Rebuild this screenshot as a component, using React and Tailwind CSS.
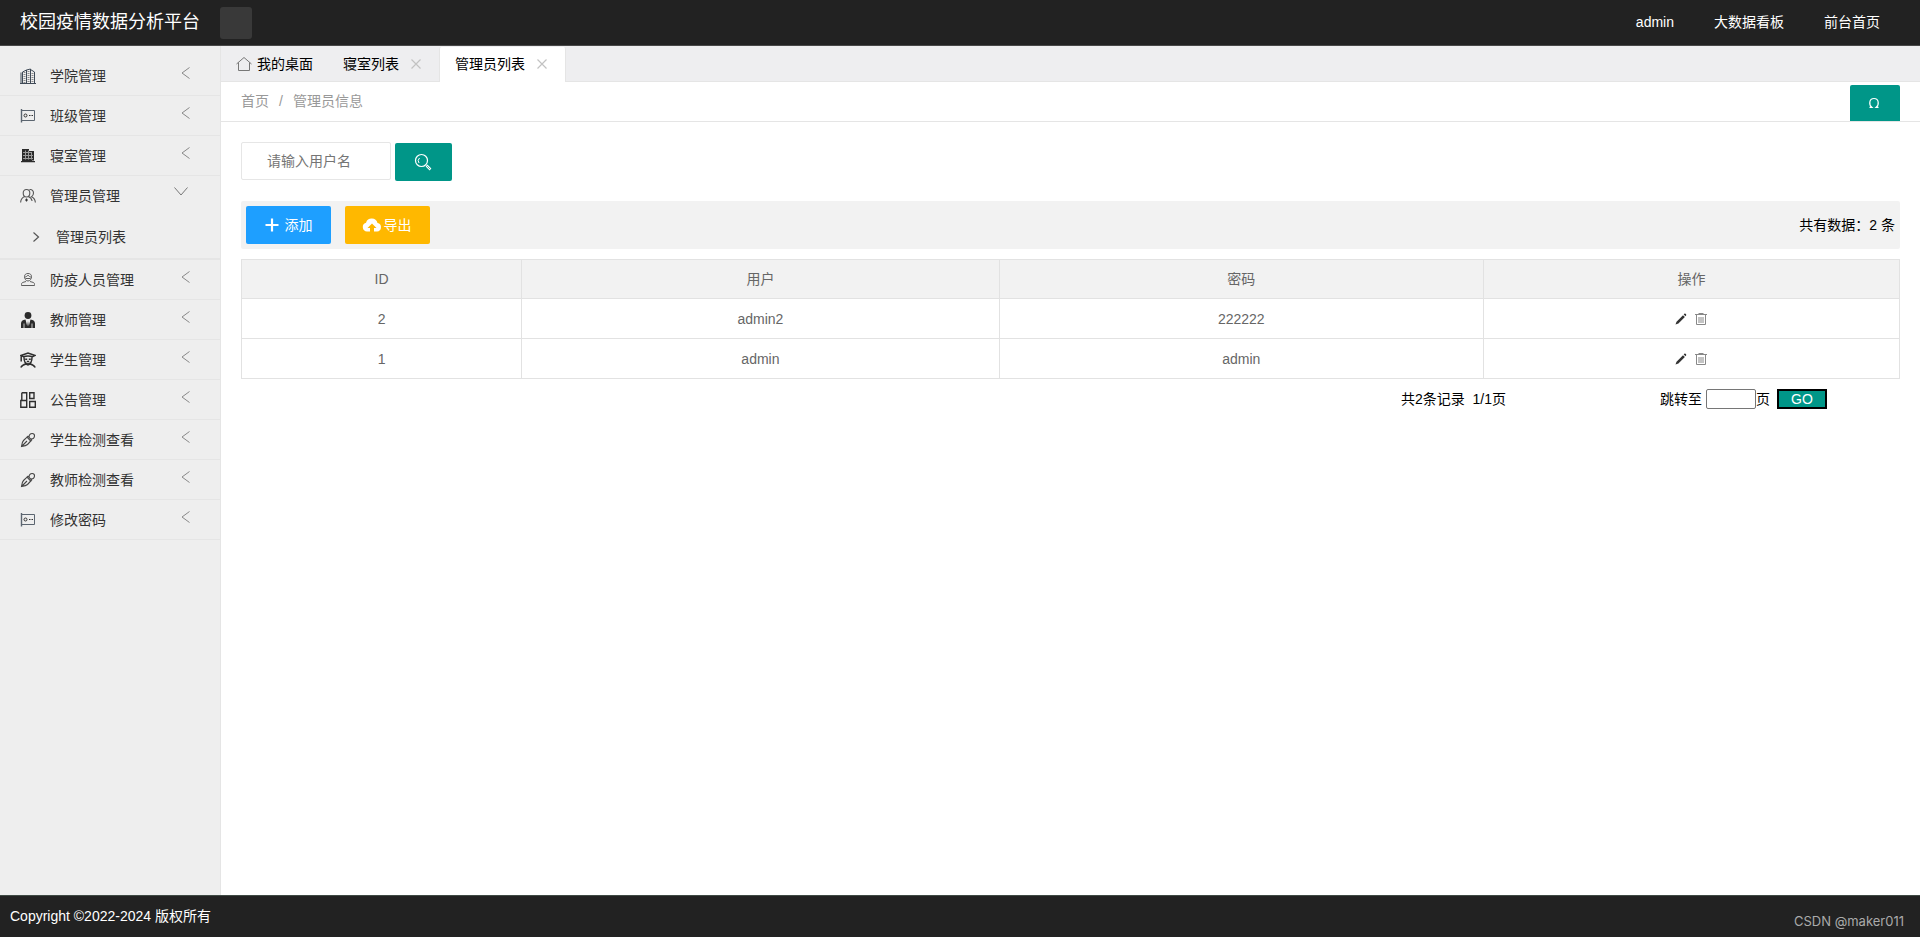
import React, { useState } from "react";

const iconPaths = {
  building: (
    <g fill="none" stroke="#3f4a57" strokeWidth="1">
      <path d="M0 15.500h16" />
      <path d="M2.500 15V4L6.500 2v13M6.500 2l4-1v14M10.500 1.500l4 2.500V15M1 15V4.500" />
      <path d="M4.500 4v11M8.500 3v12M12.500 5v10" stroke="#8b8b8b" strokeDasharray="1 1" strokeWidth="2" />
    </g>
  ),
  board: (
    <g fill="none" stroke="#5b6570" strokeWidth="1">
      <path d="M1.500 1v13.500" strokeWidth="1.400" />
      <path d="M2 2.500h12.500v10H2" />
      <circle cx="5.500" cy="7.500" r="1.500" stroke="#333" />
      <path d="M9 7.500h1.500M11.500 7.500H13" stroke="#333" />
    </g>
  ),
  dorm: (
    <g>
      <path fill="#2b2b2b" d="M2 1h7v2h5v9.500h-2V13H2zM1 13h14v1.200H1z" />
      <path stroke="#999" strokeWidth="1" d="M5.500 2.500v9M8.500 2.500v9M11.500 4.500v7M3 4.500h9M3 7.500h10M3 10.500h10" />
    </g>
  ),
  group: (
    <g fill="none" stroke="#555" strokeWidth="1.100">
      <path d="M6.500 1.500c2.200 0 3.300 1.500 3.300 3.500S8.700 9 6.500 9 3.200 7 3.200 5s1.100-3.500 3.300-3.500z" />
      <path d="M.6 14.500c.2-3.200 1.400-5 4.200-6M8.200 8.500c2.200.8 3.500 2.500 3.900 4.500M9.500 1.600c2.500-.4 4 1.200 4 3.400 0 1.700-.8 3-2 3.700 2.300 1 3.600 3 3.900 5.800" />
      <path d="M5 12h3M6.500 10.500v3" stroke="#333" />
    </g>
  ),
  medic: (
    <g fill="none" stroke="#5e5e5e" strokeWidth="1">
      <path d="M4.500 4.500C4.500 2.500 6 1.500 8 1.500s3.500 1 3.500 3C11.500 7 10 9 8 9S4.500 7 4.500 4.500z" />
      <path d="M4.500 5C6 5 7.500 4 8 3c.8 1.300 2 2 3.500 2M5.500 6.500h5M6 9.500l-3.500 1c-1 .500-1 1.500-1 3h13c0-1.500 0-2.500-1-3l-3.500-1" />
    </g>
  ),
  teacher: (
    <g fill="#2b2b2b">
      <circle cx="8" cy="3.500" r="3.400" />
      <path d="M5.500 7.500 7.200 14l.8-5 .8 5 1.700-6.500c3 .5 4.500 1.800 4.500 4V16H1v-4.500c0-2.200 1.500-3.500 4.500-4z" />
      <path d="M4 11.500V16M12 11.500V16" stroke="#eee" strokeWidth=".8" />
    </g>
  ),
  student: (
    <g fill="none" stroke="#2f2f2f" strokeWidth="1.500">
      <path d="M1 3.500 8 1l7 2.500-2.500 1.300C10 3.800 6 3.800 3.500 4.800zM1.200 4v5.500M4 5c0 4.500 1.500 7 4 7s4-2.500 4-7M5.200 7.200h2M8.800 7.200h2M6.800 9.500h2.400M.8 15.500c1-2 3-3 5.200-3.500l2 1 2-1c2.200.5 4.200 1.500 5.200 3.500" />
    </g>
  ),
  notice: (
    <g fill="none" stroke="#2f2f2f" strokeWidth="1.400">
      <path d="M1.800 .8h4.900v14.500H.8V8.500h5.900M1.800.8v7.700M9.700.8H14v5.700H9.700zM9.700 9.500h5.600v5.800H9.700z" />
    </g>
  ),
  dropper: (
    <g fill="none" stroke="#444" strokeWidth="1.100">
      <path d="M1.500 14.500c.3-2.500.5-4.500 2-6L7 5.200l3.800 3.800-3.300 3.500c-1.500 1.500-3.500 1.700-6 2zM1.500 14.500 7 9" />
      <path d="M7 5.200l1-.9 3.700 3.700-.9 1M9.200 4.700c-.2-2 1.200-3.200 3-3.200 1.400 0 2.300.9 2.300 2.300 0 1.800-1.200 3.200-3.200 3" />
    </g>
  ),
};

const menus = [
  { label: "学院管理", icon: "building" },
  { label: "班级管理", icon: "board" },
  { label: "寝室管理", icon: "dorm" },
  { label: "管理员管理", icon: "group", children: ["管理员列表"] },
  { label: "防疫人员管理", icon: "medic" },
  { label: "教师管理", icon: "teacher" },
  { label: "学生管理", icon: "student" },
  { label: "公告管理", icon: "notice" },
  { label: "学生检测查看", icon: "dropper" },
  { label: "教师检测查看", icon: "dropper" },
  { label: "修改密码", icon: "board" },
];

const users = [
  { id: 2, name: "admin2", password: "222222" },
  { id: 1, name: "admin", password: "admin" },
];

const MenuIcon = ({ name }) => (
  <svg viewBox="0 0 16 16" className="w-4 h-4 shrink-0">
    {iconPaths[name]}
  </svg>
);

const CloseIcon = () => (
  <svg viewBox="0 0 10 10" className="w-2.5 h-2.5">
    <path d="M.5.5l9 9M9.500.5l-9 9" stroke="#c2c2c2" strokeWidth="1.200" />
  </svg>
);

const Header = () => (
  <header className="h-[46px] shrink-0 bg-[#222] border-b border-[#484848] flex items-center text-white">
    <h1 className="ml-5 w-[200px] text-lg leading-[45px] whitespace-nowrap">
      校园疫情数据分析平台
    </h1>
    <button aria-label="菜单" className="w-8 h-8 rounded-[3px] bg-[#393939]" />
    <nav className="ml-auto mr-5 pb-0.5 flex">
      <a href="#" className="px-5">admin</a>
      <a href="#" className="px-5">大数据看板</a>
      <a href="#" className="px-5">前台首页</a>
    </nav>
  </header>
);

const Sidebar = () => {
  const [open, setOpen] = useState("管理员管理");

  return (
    <aside className="w-[221px] shrink-0 bg-[#eee] border-r border-[#e5e5e5] pt-2.5 text-[#333]">
      <ul>
        {menus.map((menu) => {
          const expanded = menu.children && open === menu.label;
          return (
            <li
              key={menu.label}
              className={`border-[#e5e5e5] ${expanded ? "border-b-2" : "border-b"}`}
            >
              <button
                onClick={() => setOpen(expanded ? "" : menu.label)}
                className="w-full h-[39px] pl-5 flex items-center text-left cursor-pointer"
              >
                <MenuIcon name={menu.icon} />
                <span className="ml-3.5 flex-1">{menu.label}</span>
                {expanded ? (
                  <svg viewBox="0 0 14 9" className="w-3.5 h-[9px] mr-8 mb-2">
                    <path d="M.5.5 7 8 13.500.5" fill="none" stroke="#777" />
                  </svg>
                ) : (
                  <svg viewBox="0 0 9 12" className="w-[9px] h-3 mr-[30px] mb-1.5">
                    <path d="M8.500.5 1 6l7.500 5.500" fill="none" stroke="#888" />
                  </svg>
                )}
              </button>
              {expanded && (
                <ul>
                  {menu.children.map((child) => (
                    <li key={child}>
                      <a href="#" className="h-[43px] pl-8 flex items-center">
                        <svg viewBox="0 0 8 10" className="w-2 h-2.5">
                          <path d="M1.500.5 6.500 5l-5 4.500" fill="none" stroke="#555" strokeWidth="1.200" />
                        </svg>
                        <span className="ml-4">{child}</span>
                      </a>
                    </li>
                  ))}
                </ul>
              )}
            </li>
          );
        })}
      </ul>
    </aside>
  );
};

const Tabs = () => (
  <div className="h-9 bg-[#eeeef0] border-b border-[#e5e5e5] flex items-end">
    <button className="h-[35px] px-[15px] flex items-center gap-[5px]">
      <svg viewBox="0 0 16 16" className="w-4 h-4">
        <path d="M.5 8 8 1.500 15.500 8M2.500 6.500v8h11v-8" fill="none" stroke="#777" />
      </svg>
      我的桌面
    </button>
    <div className="h-[35px] pl-[15px] pr-[18px] flex items-center gap-3">
      <button>寝室列表</button>
      <button aria-label="关闭">
        <CloseIcon />
      </button>
    </div>
    <div className="h-[35px] -mb-px pl-[15px] pr-[18px] pb-px flex items-center gap-3 bg-white border-x border-[#e5e5e5] rounded-t-xs">
      <button>管理员列表</button>
      <button aria-label="关闭">
        <CloseIcon />
      </button>
    </div>
  </div>
);

const UserTable = () => (
  <table className="w-full mt-2.5 table-fixed border-collapse text-[#666] text-center">
    <colgroup>
      <col className="w-[16.900%]" />
      <col className="w-[28.800%]" />
      <col className="w-[29.200%]" />
      <col />
    </colgroup>
    <thead>
      <tr className="h-[39px] bg-[#f2f2f2]">
        {["ID", "用户", "密码", "操作"].map((title) => (
          <th key={title} className="border border-[#e2e2e2] font-normal">
            {title}
          </th>
        ))}
      </tr>
    </thead>
    <tbody>
      {users.map((user) => (
        <tr key={user.id} className="h-10">
          <td className="border border-[#e2e2e2]">{user.id}</td>
          <td className="border border-[#e2e2e2]">{user.name}</td>
          <td className="border border-[#e2e2e2]">{user.password}</td>
          <td className="border border-[#e2e2e2]">
            <div className="flex items-center justify-center gap-2">
              <button aria-label="编辑">
                <svg viewBox="0 0 12 12" className="w-3 h-3">
                  <path d="M.5 11.500l1-2.800L8 2.200l1.900 1.900-6.500 6.500zM8.700 1.500l.9-.9c.8-.4 2 .8 1.600 1.600l-.7 1.100z" fill="#333" />
                </svg>
              </button>
              <button aria-label="删除">
                <svg viewBox="0 0 12 12" className="w-3 h-3" fill="none" stroke="#888">
                  <path d="M0 1.500h12M3.500.5h5M1.500 2v9.500h9V2M4 4v6M6 4v6M8 4v6" />
                </svg>
              </button>
            </div>
          </td>
        </tr>
      ))}
    </tbody>
  </table>
);

const App = () => {
  return (
    <div className="min-h-screen flex flex-col bg-white text-black text-sm leading-6 font-['Liberation_Sans','Noto_Sans_CJK_SC',sans-serif]">
      <Header />

      <div className="flex flex-1">
        <Sidebar />

        <main className="flex-1 min-w-0">
          <Tabs />

          {/* Breadcrumb */}
          <div className="h-10 px-5 flex items-center border-b border-[#e5e5e5] text-[#999]">
            <nav className="pb-0.5">
              <a href="#">首页</a>
              <span className="mx-2.5">/</span>
              <a href="#">管理员信息</a>
            </nav>
            <button
              aria-label="刷新"
              className="ml-auto self-end w-[50px] h-9 pr-0.5 rounded-t-xs bg-[#009688] flex items-center justify-center"
            >
              <svg viewBox="0 0 12 12" className="w-3 h-3">
                <path d="M1.500 10.300h2.300C.8 8 .8 1.500 6 1.500s5.200 6.500 2.200 8.800h2.300" fill="none" stroke="#fff" strokeWidth="1.200" />
              </svg>
            </button>
          </div>

          <div className="p-5">
            {/* Search */}
            <form className="flex items-end gap-1 h-[39px]" onSubmit={(e) => e.preventDefault()}>
              <input
                type="text"
                aria-label="用户名"
                placeholder="请输入用户名"
                className="self-start w-[150px] h-[38px] pl-[25px] border border-[#e6e6e6] rounded-xs placeholder:text-[#757575]"
              />
              <button aria-label="搜索" className="w-[57px] h-[38px] pr-0.5 rounded-xs bg-[#009688] flex items-center justify-center">
                <svg viewBox="0 0 18 18" className="w-[18px] h-[18px]" fill="none" stroke="#fff">
                  <circle cx="7.500" cy="7.500" r="6" strokeWidth="1.200" />
                  <path d="M5 10a3.800 3.800 0 0 1 .5-5" />
                  <path d="M12.500 12.500l4 4" strokeWidth="2.500" />
                  <path d="M13 13l3 3" stroke="#009688" strokeWidth=".7" />
                </svg>
              </button>
            </form>

            {/* Toolbar */}
            <div className="mt-5 h-12 px-[5px] flex items-center bg-[#f2f2f2] rounded-xs">
              <button className="w-[85px] h-[38px] rounded-xs bg-[#1e9fff] text-white flex items-center justify-center gap-1.5">
                <svg viewBox="0 0 14 14" className="w-3.5 h-3.5">
                  <path d="M7 .5v13M.5 7h13" stroke="#fff" strokeWidth="2.200" />
                </svg>
                添加
              </button>
              <button className="ml-3.5 w-[85px] h-[38px] pr-0.5 rounded-xs bg-[#ffb800] text-white flex items-center justify-center gap-0.5">
                <svg viewBox="0 0 20 16" className="w-5 h-4">
                  <path d="M5 14.500a4.500 4.500 0 0 1-1-8.800A6 6 0 0 1 15.500 6a4.300 4.300 0 0 1-.5 8.500h-3V11h2.500L10 6.500 5.500 11H8v3.500z" fill="#fff" />
                </svg>
                导出
              </button>
              <span className="ml-auto">共有数据：2 条</span>
            </div>

            <UserTable />

            {/* Pagination */}
            <div className="mt-2 mr-[73px] flex items-center justify-end">
              <span className="mr-[154px] whitespace-pre">共2条记录  1/1页</span>
              <label htmlFor="page">跳转至</label>
              <input
                id="page"
                type="text"
                className="ml-1 w-[50px] h-5 border border-[#767676] rounded-xs px-0.5"
              />
              <span>页</span>
              <button className="ml-[7px] w-[50px] h-5 bg-[#009688] border-2 border-black text-white leading-4">
                GO
              </button>
            </div>
          </div>
        </main>
      </div>

      <footer className="h-[42px] shrink-0 px-2.5 flex items-center justify-between bg-[#222] border-t border-[#3f4a44] text-white">
        <span className="pb-0.5">Copyright ©2022-2024 版权所有</span>
        <span className="mt-2 mr-1.5 text-[13px] text-[#aaa] font-['Inter','Noto_Sans_CJK_SC',sans-serif]">
          CSDN @maker011
        </span>
      </footer>
    </div>
  );
};

export default App;
